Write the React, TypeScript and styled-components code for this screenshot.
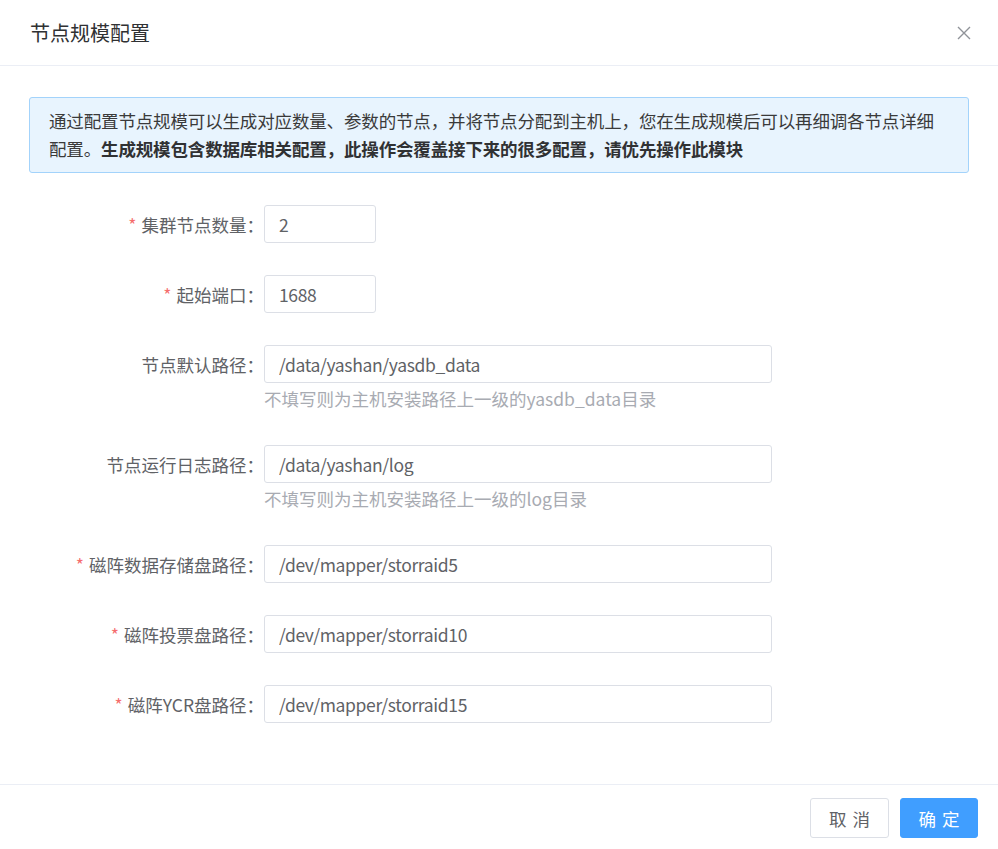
import React from "react";
import styled, { createGlobalStyle } from "styled-components";

const GlobalStyle = createGlobalStyle`
  html, body { margin: 0; padding: 0; background: #fff; }
  body {
    font-family: "Noto Sans CJK SC", "Noto Sans", sans-serif;
    color: #606266;
  }
  * { box-sizing: border-box; }
`;

const Dialog = styled.div`
  width: 998px;
  background: #fff;
  display: flex;
  flex-direction: column;
`;

const Header = styled.header`
  height: 66px;
  display: flex;
  align-items: center;
  justify-content: space-between;
  padding: 0 27px 0 30px;
  border-bottom: 1px solid #ebeef5;
`;

const Title = styled.h2`
  margin: 0;
  font-size: 20px;
  font-weight: 400;
  color: #303133;
  line-height: 24px;
`;

const CloseButton = styled.button`
  border: none;
  background: transparent;
  padding: 0;
  width: 14px;
  height: 14px;
  display: flex;
  cursor: pointer;
`;

const Body = styled.main`
  padding: 31px 29px 61px 29px;
`;

const Alert = styled.div`
  background: #e8f4fe;
  border: 1px solid #a3d3fb;
  border-radius: 3px;
  padding: 9px 19px;
  font-size: 17.5px;
  letter-spacing: -0.15px;
  line-height: 28px;
  color: #3a3a3a;
  margin-bottom: 32px;
`;

const Strong = styled.b`
  font-weight: 700;
  color: #303133;
`;

const Form = styled.form`
  display: flex;
  flex-direction: column;
  gap: 32px;
`;

const Row = styled.div`
  display: grid;
  grid-template-columns: 235px 1fr;
  align-items: start;
`;

const Label = styled.label`
  height: 38px;
  display: flex;
  align-items: center;
  justify-content: flex-end;
  font-size: 17.5px;
  color: #606266;
  white-space: nowrap;
`;

const Star = styled.span`
  color: #f56c6c;
  margin-right: 5px;
`;

const Field = styled.div`
  display: flex;
  flex-direction: column;
`;

const Input = styled.input<{ $wide?: boolean }>`
  width: ${(p) => (p.$wide ? "508px" : "112px")};
  height: 38px;
  border: 1px solid #dcdfe6;
  border-radius: 3px;
  padding: 0 14px;
  font-family: "Noto Sans CJK SC", "Noto Sans", sans-serif;
  font-size: 17.5px;
  letter-spacing: -0.35px;
  color: #606266;
  outline: none;
  background: #fff;
`;

const Hint = styled.div`
  margin-top: 2px;
  font-size: 17.5px;
  line-height: 28px;
  color: #a8abb2;
`;

const Footer = styled.footer`
  border-top: 1px solid #ebeef5;
  padding: 13px 20px 11px;
  display: flex;
  justify-content: flex-end;
  gap: 11px;
`;

const Button = styled.button<{ $primary?: boolean }>`
  width: ${(p) => (p.$primary ? "78px" : "79px")};
  height: 40px;
  border-radius: 3px;
  border: 1px solid ${(p) => (p.$primary ? "#409eff" : "#dcdfe6")};
  background: ${(p) => (p.$primary ? "#409eff" : "#fff")};
  color: ${(p) => (p.$primary ? "#fff" : "#606266")};
  font-family: "Noto Sans CJK SC", "Noto Sans", sans-serif;
  font-size: 17.5px;
  letter-spacing: 6px;
  padding: 0 0 0 6px;
  display: flex;
  align-items: center;
  justify-content: center;
  cursor: pointer;
`;

type Item = {
  label: string;
  value: string;
  required?: boolean;
  wide?: boolean;
  hint?: string;
};

const items: Item[] = [
  { label: "集群节点数量", value: "2", required: true },
  { label: "起始端口", value: "1688", required: true },
  {
    label: "节点默认路径",
    value: "/data/yashan/yasdb_data",
    wide: true,
    hint: "不填写则为主机安装路径上一级的yasdb_data目录",
  },
  {
    label: "节点运行日志路径",
    value: "/data/yashan/log",
    wide: true,
    hint: "不填写则为主机安装路径上一级的log目录",
  },
  { label: "磁阵数据存储盘路径", value: "/dev/mapper/storraid5", required: true, wide: true },
  { label: "磁阵投票盘路径", value: "/dev/mapper/storraid10", required: true, wide: true },
  { label: "磁阵YCR盘路径", value: "/dev/mapper/storraid15", required: true, wide: true },
];

export default function App() {
  return (
    <>
      <GlobalStyle />
      <Dialog>
        <Header>
          <Title>节点规模配置</Title>
          <CloseButton aria-label="关闭">
            <svg width="14" height="14" viewBox="0 0 14 14">
              <path d="M1 1 L13 13 M13 1 L1 13" stroke="#909399" strokeWidth="1.4" fill="none" />
            </svg>
          </CloseButton>
        </Header>
        <Body>
          <Alert>
            通过配置节点规模可以生成对应数量、参数的节点，并将节点分配到主机上，您在生成规模后可以再细调各节点详细配置。
            <Strong>生成规模包含数据库相关配置，此操作会覆盖接下来的很多配置，请优先操作此模块</Strong>
          </Alert>
          <Form onSubmit={(e) => e.preventDefault()}>
            {items.map((it) => (
              <Row key={it.label}>
                <Label>
                  {it.required && <Star>*</Star>}
                  {it.label}：
                </Label>
                <Field>
                  <Input $wide={it.wide} defaultValue={it.value} />
                  {it.hint && <Hint>{it.hint}</Hint>}
                </Field>
              </Row>
            ))}
          </Form>
        </Body>
        <Footer>
          <Button>取消</Button>
          <Button $primary>确定</Button>
        </Footer>
      </Dialog>
    </>
  );
}
